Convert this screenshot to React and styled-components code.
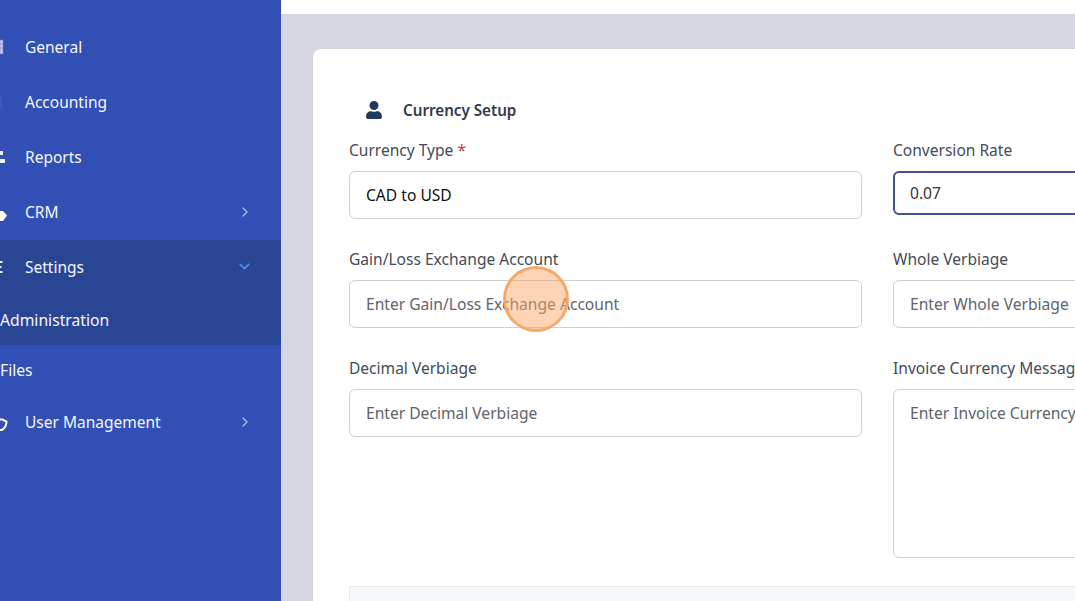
import styled, { createGlobalStyle } from 'styled-components';
import { FaUser } from 'react-icons/fa';
import { ChevronRight, ChevronDown } from 'lucide-react';

const Global = createGlobalStyle`
    html, body {
        margin: 0;
        padding: 0;
        height: 601px;
        overflow: hidden;
        font-family: "Noto Sans", "Open Sans", sans-serif;
    }
    * { box-sizing: border-box; }
`;

const Page = styled.div`
    display: flex;
    width: 1075px;
    height: 601px;
    overflow: hidden;
    background: #d5d6e2;
`;

const Sidebar = styled.nav`
    flex: 0 0 281px;
    height: 601px;
    padding-top: 20px;
    background: #314fb5;
    color: #f4f6fc;
`;

const NavItem = styled.div`
    display: flex;
    align-items: center;
    height: 55px;
    padding: 0 28px 2px 0;
    font-size: 15.5px;
    background: ${(p) => (p.$open ? '#2a4594' : 'transparent')};
`;

// the sidebar is scrolled sideways in the shot, so only the tips of the icons show
const IconSlot = styled.span`
    display: flex;
    flex: 0 0 25px;
    align-items: center;
`;

const NavLabel = styled.span`
    flex: 1;
`;

const SubItem = styled.div`
    display: flex;
    align-items: center;
    height: 50px;
    font-size: 15.7px;
    background: ${(p) => (p.$open ? '#2a4594' : 'transparent')};
`;

const Main = styled.main`
    flex: 1;
    min-width: 0;
    display: flex;
    flex-direction: column;
`;

const TopBar = styled.div`
    flex: 0 0 14px;
    background: #fff;
`;

const Content = styled.div`
    flex: 1;
    padding: 35px 0 0 32px;
`;

const Card = styled.section`
    width: 860px;
    height: 560px;
    padding: 36px 36px 0;
    background: #fff;
    border-radius: 8px;
`;

const Heading = styled.h2`
    display: flex;
    align-items: center;
    gap: 20px;
    height: 55px;
    margin: 0;
    padding: 0 0 5px 16px;
    font-size: 15.2px;
    font-weight: 600;
    color: #333945;
`;

const FormGrid = styled.div`
    display: grid;
    grid-template-columns: 513px 513px;
    column-gap: 31px;
    align-items: start;
`;

const Field = styled.div`
    height: ${(p) => (p.$tall ? 'auto' : '109px')};
`;

const Label = styled.label`
    display: block;
    height: 31px;
    font-size: 15.55px;
    line-height: 20px;
    color: #444a58;
`;

const Required = styled.span`
    color: #d0333f;
`;

const Input = styled.div`
    display: flex;
    align-items: center;
    height: 48px;
    padding: 0 16px;
    background: #fff;
    border: 1px solid #cfcfcf;
    border-radius: 6px;
    font-size: 15.6px;
    white-space: nowrap;
    color: ${(p) => (p.$filled ? '#111' : '#60646c')};
`;

const FocusedInput = styled(Input)`
    height: 44px;
    border: 2px solid #3f5492;
    padding: 0 15px;
    color: #333;
`;

const TextArea = styled(Input)`
    align-items: flex-start;
    height: 169px;
    padding-top: 12px;
`;

const Footer = styled.div`
    height: 40px;
    margin-top: 28px;
    background: #f7f8fa;
    border: 1px solid #e9eaec;
`;

const ClickMark = styled.div`
    position: absolute;
    left: 503px;
    top: 266px;
    width: 66px;
    height: 66px;
    border-radius: 50%;
    background: rgba(253, 170, 110, 0.5);
    border: 3px solid rgba(245, 165, 100, 0.9);
`;

const GeneralTip = () => (
    <svg width="5" height="16" viewBox="0 0 5 16">
        <path d="M0 1h3v14H0zM0 5h3M0 9h3" fill="#d6cfe4" stroke="#6f7cc4" strokeWidth=".6" />
    </svg>
);

const AccountingTip = () => (
    <svg width="3" height="16" viewBox="0 0 3 16">
        <path d="M0 1h2v14H0z" fill="#4058b8" />
    </svg>
);

const ReportsTip = () => (
    <svg width="6" height="14" viewBox="0 0 6 14">
        <path d="M0 1h3v4H0zM0 9h5v4H0z" fill="#f0f2fa" />
    </svg>
);

const CrmTip = () => (
    <svg width="8" height="12" viewBox="0 0 8 12" style={{ marginTop: 8 }}>
        <path d="M0 1h3l4 4.5L3 11H0z" fill="#fff" />
    </svg>
);

const SettingsTip = () => (
    <svg width="4" height="12" viewBox="0 0 4 12">
        <path d="M0 1h2.5M0 6h1.5M0 11h2.5" stroke="#eef0fa" strokeWidth="1.8" />
    </svg>
);

const UserTip = () => (
    <svg width="8" height="14" viewBox="0 0 8 14" style={{ marginTop: 6 }}>
        <path d="M0 1.5h2.5L6.5 3.5c0 4-1.5 6.5-4.5 8.500H0" fill="none" stroke="#fff" strokeWidth="2" />
    </svg>
);

const arrow = <ChevronRight size={16} color="#a9b5e0" strokeWidth={2.2} />;

export default function App() {
    return (
        <Page>
            <Global />
            <Sidebar>
                <NavItem><IconSlot><GeneralTip /></IconSlot><NavLabel>General</NavLabel></NavItem>
                <NavItem><IconSlot><AccountingTip /></IconSlot><NavLabel>Accounting</NavLabel></NavItem>
                <NavItem><IconSlot><ReportsTip /></IconSlot><NavLabel>Reports</NavLabel></NavItem>
                <NavItem><IconSlot><CrmTip /></IconSlot><NavLabel>CRM</NavLabel>{arrow}</NavItem>
                <NavItem $open>
                    <IconSlot><SettingsTip /></IconSlot>
                    <NavLabel>Settings</NavLabel>
                    <ChevronDown size={17} color="#3f93f2" strokeWidth={2.6} />
                </NavItem>
                <SubItem $open>Administration</SubItem>
                <SubItem>Files</SubItem>
                <NavItem><IconSlot><UserTip /></IconSlot><NavLabel>User Management</NavLabel>{arrow}</NavItem>
            </Sidebar>
            <Main>
                <TopBar />
                <Content>
                    <Card>
                        <Heading><FaUser size={18} color="#1f3a5c" /> Currency Setup</Heading>
                        <FormGrid>
                            <Field>
                                <Label>Currency Type <Required>*</Required></Label>
                                <Input $filled>CAD to USD</Input>
                            </Field>
                            <Field>
                                <Label>Conversion Rate</Label>
                                <FocusedInput>0.07</FocusedInput>
                            </Field>
                            <Field>
                                <Label>Gain/Loss Exchange Account</Label>
                                <Input>Enter Gain/Loss Exchange Account</Input>
                            </Field>
                            <Field>
                                <Label>Whole Verbiage</Label>
                                <Input>Enter Whole Verbiage</Input>
                            </Field>
                            <Field>
                                <Label>Decimal Verbiage</Label>
                                <Input>Enter Decimal Verbiage</Input>
                            </Field>
                            <Field $tall>
                                <Label>Invoice Currency Message</Label>
                                <TextArea>Enter Invoice Currency Message</TextArea>
                            </Field>
                        </FormGrid>
                        <Footer />
                    </Card>
                </Content>
            </Main>
            <ClickMark />
        </Page>
    );
}
